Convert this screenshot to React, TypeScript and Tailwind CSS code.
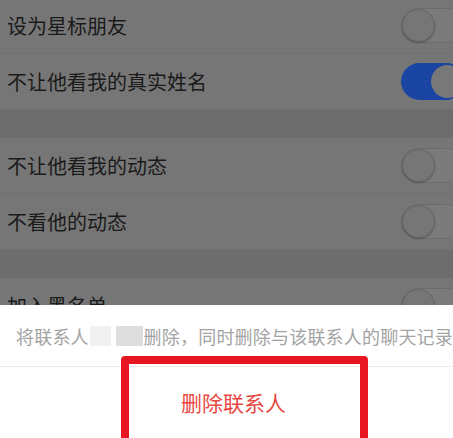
const font = { fontFamily: '"Noto Sans CJK SC", "Noto Sans", sans-serif' };

type Row = { label: string; on?: boolean };

function Toggle({ on }: { on?: boolean }) {
    if (on) {
        return (
            <div className="relative h-[37px] w-[64px] shrink-0 rounded-full bg-[#1b45a3]">
                <div className="absolute right-[1px] top-[2px] h-[33px] w-[33px] rounded-full bg-[#787878]" />
            </div>
        );
    }
    return (
        <div className="relative h-[35px] w-[64px] shrink-0 rounded-full border border-[#6c6c6c] bg-[#7b7b7b]">
            <div className="absolute left-0 top-0 h-[33px] w-[33px] rounded-full border border-[#666666] bg-[#767676] shadow-[0_1px_2px_rgba(0,0,0,0.25)]" />
        </div>
    );
}

function SettingRow({ label, on }: Row) {
    return (
        <div className="flex h-[56px] items-center justify-between border-b border-[#707070] bg-[#767676] pl-[7px]">
            <span className="text-[20px] leading-none text-[#1a1a1a]">{label}</span>
            <div className="mr-[-12px]">
                <Toggle on={on} />
            </div>
        </div>
    );
}

export default function App() {
    return (
        <div className="relative h-[438px] w-[453px] overflow-hidden bg-[#6d6d6d]" style={font}>
            <div className="mt-[-2px] flex flex-col">
                <SettingRow label="设为星标朋友" />
                <SettingRow label="不让他看我的真实姓名" on />
                <div className="h-[28px]" />
                <SettingRow label="不让他看我的动态" />
                <SettingRow label="不看他的动态" />
                <div className="h-[28px]" />
                <SettingRow label="加入黑名单" />
            </div>

            {/* action sheet */}
            <div className="absolute bottom-0 left-0 right-0 top-[305px] flex flex-col bg-white">
                <div className="flex h-[63px] items-center whitespace-nowrap border-b border-[#ececec] pl-[16px] text-[18px] leading-none tracking-[0.2px] text-[#a3a3a3]">
                    <span>将联系人</span>
                    <span className="ml-[1px] mr-[5px] h-[20px] w-[23px] bg-[#f1f1f1]" />
                    <span className="mr-[1px] h-[20px] w-[28px] bg-[#dedede]" />
                    <span>删除，同时删除与该联系人的聊天记录</span>
                </div>
                <div className="flex h-[72px] items-center justify-center pl-[14px] text-[21px] leading-none text-[#e8473f]">
                    删除联系人
                </div>
            </div>

            {/* highlight box */}
            <div className="absolute left-[121px] top-[356px] h-[92px] w-[247px] rounded-[4px] border-[8px] border-[#e81620]" />
        </div>
    );
}
